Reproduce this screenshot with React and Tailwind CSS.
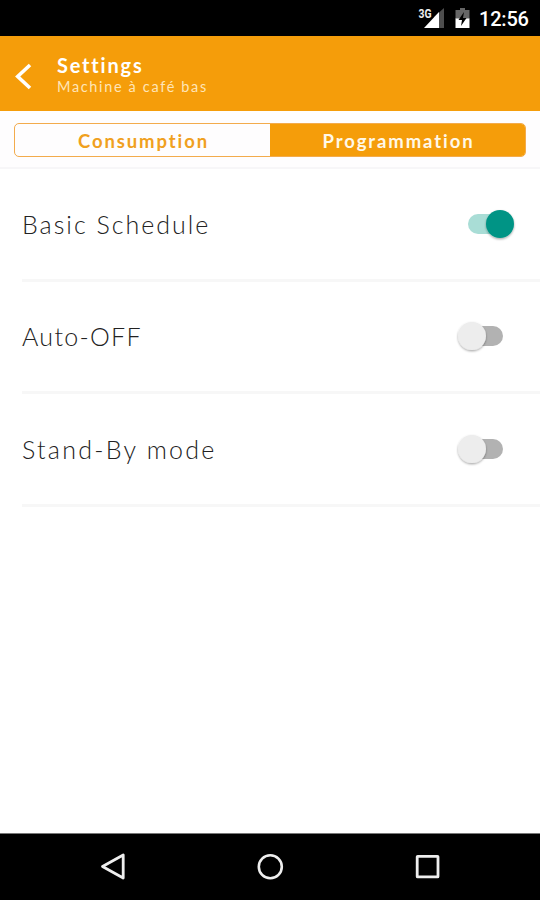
const rows = [
  { label: "Basic Schedule", on: true, tracking: "tracking-[2px]" },
  { label: "Auto-OFF", on: false, tracking: "tracking-[1.3px]" },
  { label: "Stand-By mode", on: false, tracking: "tracking-[2.25px]" },
];

function StatusBar() {
  return (
    <div className="flex h-9 shrink-0 items-start bg-black pl-[416px] text-white">
      <svg width="30" height="36" viewBox="0 0 30 36">
        <path d="M18 17L28 8V28H18Z" fill="#4d4d4d" />
        <path d="M8 28L23 12V28Z" fill="#fff" />
        <text x="2.5" y="18" fill="#eee" fontFamily="Roboto, sans-serif" fontSize="13" fontWeight="700" textLength="13" lengthAdjust="spacingAndGlyphs">3G</text>
      </svg>
      <svg className="ml-[9px]" width="16" height="36" viewBox="0 0 16 36">
        <path d="M5 8H10V10H14.5V19H.5V10H5Z" fill="#666" />
        <path d="M.5 18.5H14.5V28H.5Z" fill="#fff" />
        <path d="M9 12L3.5 20H7L6 26L11.5 18H8Z" fill="#000" />
      </svg>
      <span className="ml-2 pt-[7px] font-[Roboto,sans-serif] text-[20px] leading-6 font-medium tracking-[-0.2px]">12:56</span>
    </div>
  );
}

function Header() {
  return (
    <header className="flex h-[75px] shrink-0 bg-[#f59d0a] pl-[14px] text-white">
      <svg className="mt-[26px]" width="18" height="28" viewBox="0 0 18 28" fill="none" stroke="#fff" strokeWidth="3.6">
        <path d="M16 3L3.7 14.5L16 26" />
      </svg>
      <div className="ml-[25px] pt-[17px]">
        <h1 className="text-[20px] leading-6 font-bold tracking-[1.8px]">Settings</h1>
        <p className="mt-px text-[14.5px] leading-[18px] tracking-[1.65px] text-[#ffe5b8]">Machine à café bas</p>
      </div>
    </header>
  );
}

function Tabs() {
  return (
    <div className="h-[58px] shrink-0 border-b-2 border-[#f7f6f8] bg-[#fefdfe] px-[14px] pt-3">
      <div className="flex h-[34px] overflow-hidden rounded-[5px] border border-[#f3ab4c] text-[18.5px] leading-[34px] font-bold">
        <button className="w-[255px] pl-[2px] tracking-[1.9px] text-[#f0a020]">Consumption</button>
        <button className="flex-1 bg-[#f59d0a] pl-[2px] tracking-[1.9px] text-[#fff8e8]">Programmation</button>
      </div>
    </div>
  );
}

function Toggle({ on }) {
  return (
    <svg width="64" height="40" viewBox="0 0 64 40">
      <defs>
        <filter id="knob-shadow" x="-30%" y="-30%" width="160%" height="160%">
          <feDropShadow dx="0" dy="1.2" stdDeviation="1.1" floodColor="#000" floodOpacity="0.35" />
        </filter>
      </defs>
      <rect x={on ? 16 : 15} y="10" width="36" height="20" rx="10" fill={on ? "#a9ddd6" : "#b2b2b2"} />
      <circle cx={on ? 48 : 20} cy="20" r="14" fill={on ? "#009485" : "#ededed"} filter="url(#knob-shadow)" />
    </svg>
  );
}

function NavBar() {
  return (
    <nav className="flex h-[67px] shrink-0 items-center justify-between border-t border-[#777] bg-black px-[98px]">
      <svg width="30" height="30" viewBox="0 0 30 30" fill="none" stroke="#eee" strokeWidth="2.8" strokeLinejoin="round">
        <path d="M4.5 14.5L25.2 3V26Z" />
      </svg>
      <svg width="30" height="30" viewBox="0 0 30 30" fill="none" stroke="#eee" strokeWidth="2.6">
        <circle cx="15.3" cy="14.7" r="11.5" />
      </svg>
      <svg width="30" height="30" viewBox="0 0 30 30" fill="none" stroke="#eee" strokeWidth="2.8" strokeLinejoin="round">
        <rect x="5.2" y="4.3" width="20.8" height="20.6" rx="0.5" />
      </svg>
    </nav>
  );
}

export default function App() {
  return (
    <div className="flex h-[900px] w-[540px] flex-col overflow-hidden bg-white font-[Lato,sans-serif]">
      <StatusBar />
      <Header />
      <Tabs />
      <main className="flex-1 pl-[22px]">
        {rows.map((r) => (
          <div key={r.label} className="flex h-[112.5px] items-center justify-between border-b-3 border-[#f7f7f7] pr-6">
            <span className={`text-[25px] leading-8 font-light text-[#222] ${r.tracking}`}>{r.label}</span>
            <Toggle on={r.on} />
          </div>
        ))}
      </main>
      <NavBar />
    </div>
  );
}
